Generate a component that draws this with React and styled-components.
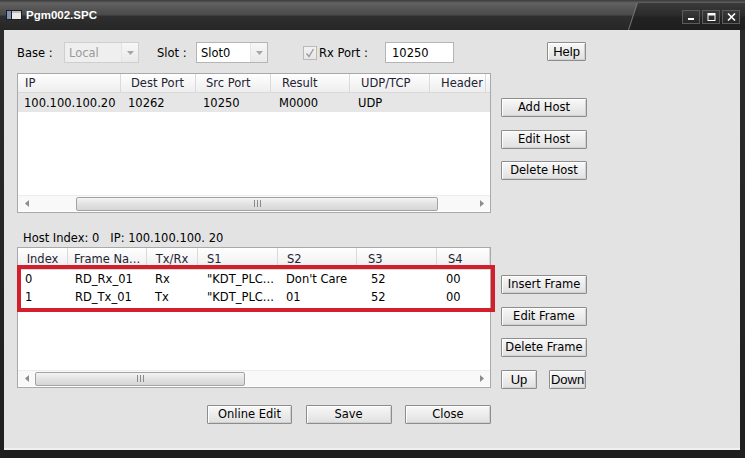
import React from 'react';
import styled, { createGlobalStyle } from 'styled-components';

const GlobalStyle = createGlobalStyle`
  html, body {
    margin: 0;
    padding: 0;
    background: #262626;
  }
  body {
    font-family: "DejaVu Sans", Verdana, sans-serif;
    font-size: 11px;
    color: #000;
  }
`;

const hostColumns = [
  { key: 'ip', label: 'IP', width: 103, pad: 7, cellPad: 6 },
  { key: 'dest', label: 'Dest Port', width: 75, pad: 10, cellPad: 7 },
  { key: 'src', label: 'Src Port', width: 75, pad: 10, cellPad: 7 },
  { key: 'result', label: 'Result', width: 79, pad: 11, cellPad: 8 },
  { key: 'proto', label: 'UDP/TCP', width: 80, pad: 11, cellPad: 8 },
  { key: 'header', label: 'Header', width: 56, pad: 11, cellPad: 8 },
];

const hostRows = [
  { ip: '100.100.100.20', dest: '10262', src: '10250', result: 'M0000', proto: 'UDP', header: '' },
];

const frameColumns = [
  { key: 'index', label: 'Index', width: 50, align: 'center', cellPad: 7 },
  { key: 'name', label: 'Frame Na...', width: 79, align: 'center', cellPad: 7 },
  { key: 'dir', label: 'Tx/Rx', width: 51, align: 'center', cellPad: 8 },
  { key: 's1', label: 'S1', width: 80, pad: 9, cellPad: 9 },
  { key: 's2', label: 'S2', width: 79, pad: 9, cellPad: 8 },
  { key: 's3', label: 'S3', width: 80, pad: 11, cellPad: 14 },
  { key: 's4', label: 'S4', width: 53, pad: 11, cellPad: 9 },
];

const frameRows = [
  { index: '0', name: 'RD_Rx_01', dir: 'Rx', s1: '"KDT_PLC...', s2: "Don't Care", s3: '52', s4: '00' },
  { index: '1', name: 'RD_Tx_01', dir: 'Tx', s1: '"KDT_PLC...', s2: '01', s3: '52', s4: '00' },
];

const Window = styled.div`
  width: 745px;
  height: 458px;
  display: flex;
  flex-direction: column;
  background: linear-gradient(#2c2c2c, #1f1f1f);
  overflow: hidden;
`;

const TitleBar = styled.div`
  position: relative;
  height: 30px;
  flex: 0 0 30px;
  display: flex;
  align-items: center;
  padding: 0 5px 0 6px;
  box-sizing: border-box;
  background: linear-gradient(#3a3a3a 0, #626262 3px, #545454 9px, #4a4a4a 15px, #2f2f2f 16px, #262626 30px);
  overflow: hidden;

  &::after {
    content: '';
    position: absolute;
    top: 3px;
    bottom: 0;
    left: 628px;
    right: -20px;
    transform: skewX(-18deg);
    transform-origin: bottom left;
    background: linear-gradient(#3a3a3a, #2a2a2a 13px, #222 14px, #1e1e1e);
    border-left: 1px solid #777;
  }
`;

const Title = styled.span`
  margin-left: 4px;
  font-family: "Liberation Sans", Arial, sans-serif;
  font-weight: bold;
  font-size: 11.5px;
  color: #fff;
`;

const Caption = styled.div`
  position: relative;
  z-index: 1;
  margin-left: auto;
  display: flex;
  gap: 2px;
  margin-top: 4px;
`;

const CaptionButton = styled.div`
  width: 18px;
  height: 14px;
  box-sizing: border-box;
  border: 1px solid #5c5c5c;
  background: linear-gradient(#3a3a3a, #262626);
  display: flex;
  align-items: center;
  justify-content: center;
`;

const Client = styled.div`
  flex: 0 0 420px;
  margin: 0 5px 0 4px;
  background: #e3e3e3;
  box-sizing: border-box;
  padding: 12px 0 0 13px;
  display: flex;
  flex-direction: column;
  border-bottom: 2px solid #f0f0f0;
`;

const TopRow = styled.div`
  display: flex;
  align-items: center;
  height: 21px;
`;

const Label = styled.span`
  flex: 0 0 ${p => p.$w}px;
  margin-left: ${p => p.$ml || 0}px;
  white-space: nowrap;
  font-size: 11.5px;
`;

const Combo = styled.div`
  flex: 0 0 ${p => p.$w}px;
  height: 21px;
  box-sizing: border-box;
  border: 1px solid ${p => (p.$disabled ? '#cfcfcf' : '#b5b5b5')};
  background: ${p => (p.$disabled ? '#efefef' : '#fff')};
  color: ${p => (p.$disabled ? '#9a9a9a' : '#000')};
  display: flex;
  align-items: center;
  font-size: 11.5px;
`;

const ComboText = styled.span`
  flex: 1;
  padding-left: 4px;
`;

const ComboArrow = styled.div`
  flex: 0 0 17px;
  height: 100%;
  box-sizing: border-box;
  border-left: 1px solid #e4e4e4;
  background: linear-gradient(#f7f7f7, #e9e9e9);
  display: flex;
  align-items: center;
  justify-content: center;
`;

const Check = styled.div`
  flex: 0 0 14px;
  height: 14px;
  margin-left: ${p => p.$ml}px;
  box-sizing: border-box;
  border: 1px solid #b9b9b9;
  background: linear-gradient(#f2f2f2, #e6e6e6);
  display: flex;
  align-items: center;
  justify-content: center;
`;

const TextBox = styled.div`
  flex: 0 0 ${p => p.$w}px;
  height: 21px;
  box-sizing: border-box;
  border: 1px solid #b5b5b5;
  background: #fff;
  padding-left: 6px;
  display: flex;
  align-items: center;
  font-size: 11.5px;
`;

const Button = styled.button`
  width: ${p => p.$w || 86}px;
  height: 19px;
  margin-left: ${p => p.$ml || 0}px;
  padding: 0;
  box-sizing: border-box;
  border: 1px solid #8d8d8d;
  border-radius: 1px;
  box-shadow: inset 1px 1px 0 #fff, inset -1px -1px 0 #d0d0d0;
  background: linear-gradient(#f8f8f8, #ececec 50%, #e0e0e0);
  color: #000;
  font-family: ${p => (p.$arial ? '"Liberation Sans", Arial, sans-serif' : '"DejaVu Sans", Verdana, sans-serif')};
  font-size: ${p => (p.$arial ? '13px' : '11.5px')};
  line-height: 17px;
  white-space: nowrap;
`;

const Section = styled.div`
  display: flex;
  margin-top: ${p => p.$mt}px;
  position: relative;
`;

const List = styled.div`
  width: 474px;
  height: ${p => p.$h}px;
  box-sizing: border-box;
  border: 1px solid #a9a9a9;
  background: #fff;
  display: flex;
  flex-direction: column;
`;

const HeaderRow = styled.div`
  display: flex;
  height: ${p => p.$h}px;
  flex: 0 0 ${p => p.$h}px;
  background: linear-gradient(#fff, #f6f6f6 50%, #eeeeee);
  border-bottom: 1px solid #d9d9d9;
  box-sizing: border-box;
  color: #1d2333;
`;

const HeadCell = styled.div`
  flex: 0 0 ${p => p.$w}px;
  box-sizing: border-box;
  padding-left: ${p => p.$pad || 0}px;
  text-align: ${p => p.$align || 'left'};
  border-right: 1px solid #dadada;
  display: flex;
  align-items: center;
  justify-content: ${p => (p.$align === 'center' ? 'center' : 'flex-start')};
  white-space: nowrap;
  overflow: hidden;
  font-size: 11.5px;
`;

const Body = styled.div`
  flex: 1;
`;

const Row = styled.div`
  display: flex;
  height: ${p => p.$h}px;
  align-items: center;
  background: ${p => (p.$selected ? '#e6e6e6' : 'transparent')};
`;

const Cell = styled.div`
  flex: 0 0 ${p => p.$w}px;
  box-sizing: border-box;
  padding-left: ${p => p.$pad}px;
  white-space: nowrap;
  overflow: hidden;
  font-size: 11.5px;
`;

const HScroll = styled.div`
  flex: 0 0 16px;
  height: 16px;
  margin-bottom: 1px;
  display: flex;
  align-items: center;
  background: #f9f9f9;
  border-top: 1px solid #ededed;
  box-sizing: border-box;
`;

const ScrollArrow = styled.div`
  flex: 0 0 17px;
  display: flex;
  align-items: center;
  justify-content: center;
`;

const Thumb = styled.div`
  margin-left: ${p => p.$offset}px;
  width: ${p => p.$w}px;
  height: 14px;
  box-sizing: border-box;
  border: 1px solid #a3a3a3;
  border-radius: 2px;
  background: linear-gradient(#f4f4f4, #e2e2e2 50%, #d6d6d6);
  display: flex;
  align-items: center;
  justify-content: ${p => (p.$gripAt ? 'flex-start' : 'center')};
  padding-left: ${p => p.$gripAt || 0}px;
`;

const Track = styled.div`
  flex: 1;
`;

const SideColumn = styled.div`
  display: flex;
  flex-direction: column;
  gap: 12.5px;
  margin-left: 10px;
  padding-top: ${p => p.$pt}px;
`;

const HelpSlot = styled.div`
  margin-left: 93px;
  margin-top: -2px;
`;

const InfoLine = styled.div`
  margin-top: 18px;
  padding-left: 6px;
  height: 16px;
  font-size: 11.5px;
`;

const Pair = styled.div`
  display: flex;
  gap: 12px;
`;

const Highlight = styled.div`
  position: absolute;
  left: 0;
  top: 18px;
  width: 478px;
  height: 47px;
  box-sizing: border-box;
  border: 4px solid #d21f2b;
  pointer-events: none;
`;

const BottomRow = styled.div`
  display: flex;
  gap: 13.5px;
  margin-top: 16px;
  margin-left: 190px;
`;

const Grip = () => (
  <svg width="9" height="7" viewBox="0 0 9 7">
    <path d="M1.5 0v7M4.5 0v7M7.5 0v7" stroke="#8a8a8a" strokeWidth="1" />
  </svg>
);

const LeftTri = () => (
  <svg width="4" height="7" viewBox="0 0 4 7"><path d="M4 0L0 3.5 4 7z" fill="#8c8c8c" /></svg>
);

const RightTri = () => (
  <svg width="4" height="7" viewBox="0 0 4 7"><path d="M0 0l4 3.5L0 7z" fill="#8c8c8c" /></svg>
);

const DownTri = () => (
  <svg width="7" height="4" viewBox="0 0 7 4"><path d="M0 0h7L3.5 4z" fill="#a6a6a6" /></svg>
);

const ScrollBar = ({ offset, width }) => (
  <HScroll>
    <ScrollArrow><LeftTri /></ScrollArrow>
    <Thumb $offset={offset} $w={width}><Grip /></Thumb>
    <Track />
    <ScrollArrow><RightTri /></ScrollArrow>
  </HScroll>
);

const ListView = ({ columns, rows, height, headH, rowH, selected, scroll }) => (
  <List $h={height}>
    <HeaderRow $h={headH}>
      {columns.map(c => (
        <HeadCell key={c.key} $w={c.width} $pad={c.pad} $align={c.align}>{c.label}</HeadCell>
      ))}
    </HeaderRow>
    <Body>
      {rows.map((r, i) => (
        <Row key={i} $h={rowH} $selected={selected === i}>
          {columns.map(c => (
            <Cell key={c.key} $w={c.width} $pad={c.cellPad}>{r[c.key]}</Cell>
          ))}
        </Row>
      ))}
    </Body>
    <ScrollBar offset={scroll.offset} width={scroll.width} />
  </List>
);

const AppIcon = () => (
  <svg width="16" height="10" viewBox="0 0 16 10">
    <rect x="0" y="0" width="16" height="10" fill="#1d1d1d" />
    <rect x="1" y="1" width="4" height="8" fill="#7d93b5" />
    <rect x="6" y="1" width="9" height="8" fill="#e8e8e8" />
    <rect x="6" y="1" width="9" height="2" fill="#bdbdbd" />
  </svg>
);

export default function App() {
  return (
    <>
      <GlobalStyle />
      <Window>
        <TitleBar>
          <AppIcon />
          <Title>Pgm002.SPC</Title>
          <Caption>
            <CaptionButton>
              <svg width="8" height="8" viewBox="0 0 8 8"><rect x="1" y="5" width="6" height="2" fill="#fff" /></svg>
            </CaptionButton>
            <CaptionButton>
              <svg width="9" height="8" viewBox="0 0 9 8"><rect x="1" y="0.5" width="7" height="7" fill="none" stroke="#fff" strokeWidth="1" /><rect x="1" y="0.5" width="7" height="2" fill="#fff" /></svg>
            </CaptionButton>
            <CaptionButton>
              <svg width="9" height="8" viewBox="0 0 9 8"><path d="M1 0.5l7 7M8 0.5l-7 7" stroke="#fff" strokeWidth="1.6" /></svg>
            </CaptionButton>
          </Caption>
        </TitleBar>
        <Client>
          <TopRow>
            <Label $w={47}>Base :</Label>
            <Combo $w={75} $disabled>
              <ComboText>Local</ComboText>
              <ComboArrow><DownTri /></ComboArrow>
            </Combo>
            <Label $w={39} $ml={18}>Slot :</Label>
            <Combo $w={72}>
              <ComboText>Slot0</ComboText>
              <ComboArrow><DownTri /></ComboArrow>
            </Combo>
            <Check $ml={35}>
              <svg width="10" height="10" viewBox="0 0 10 10">
                <path d="M1.5 5.5l2.5 3L8.5 1" fill="none" stroke="#9c9c9c" strokeWidth="1.4" />
              </svg>
            </Check>
            <Label $w={66} $ml={2}>Rx Port :</Label>
            <TextBox $w={69}>10250</TextBox>
            <HelpSlot>
              <Button $w={39} $arial>Help</Button>
            </HelpSlot>
          </TopRow>

          <Section $mt={10}>
            <ListView
              columns={hostColumns}
              rows={hostRows}
              height={140}
              headH={19}
              rowH={19}
              selected={0}
              scroll={{ offset: 41, width: 362 }}
            />
            <SideColumn $pt={25}>
              <Button>Add Host</Button>
              <Button>Edit Host</Button>
              <Button>Delete Host</Button>
            </SideColumn>
          </Section>

          <InfoLine>Host Index: 0&nbsp;&nbsp; IP: 100.100.100. 20</InfoLine>

          <Section $mt={0}>
            <ListView
              columns={frameColumns}
              rows={frameRows}
              height={141}
              headH={22}
              rowH={18}
              scroll={{ offset: 0, width: 210 }}
            />
            <Highlight />
            <SideColumn $pt={28}>
              <Button>Insert Frame</Button>
              <Button>Edit Frame</Button>
              <Button>Delete Frame</Button>
              <Pair>
                <Button $w={36} $arial>Up</Button>
                <Button $w={37} $arial>Down</Button>
              </Pair>
            </SideColumn>
          </Section>

          <BottomRow>
            <Button $w={85}>Online Edit</Button>
            <Button $w={86}>Save</Button>
            <Button $w={86}>Close</Button>
          </BottomRow>
        </Client>
      </Window>
    </>
  );
}
